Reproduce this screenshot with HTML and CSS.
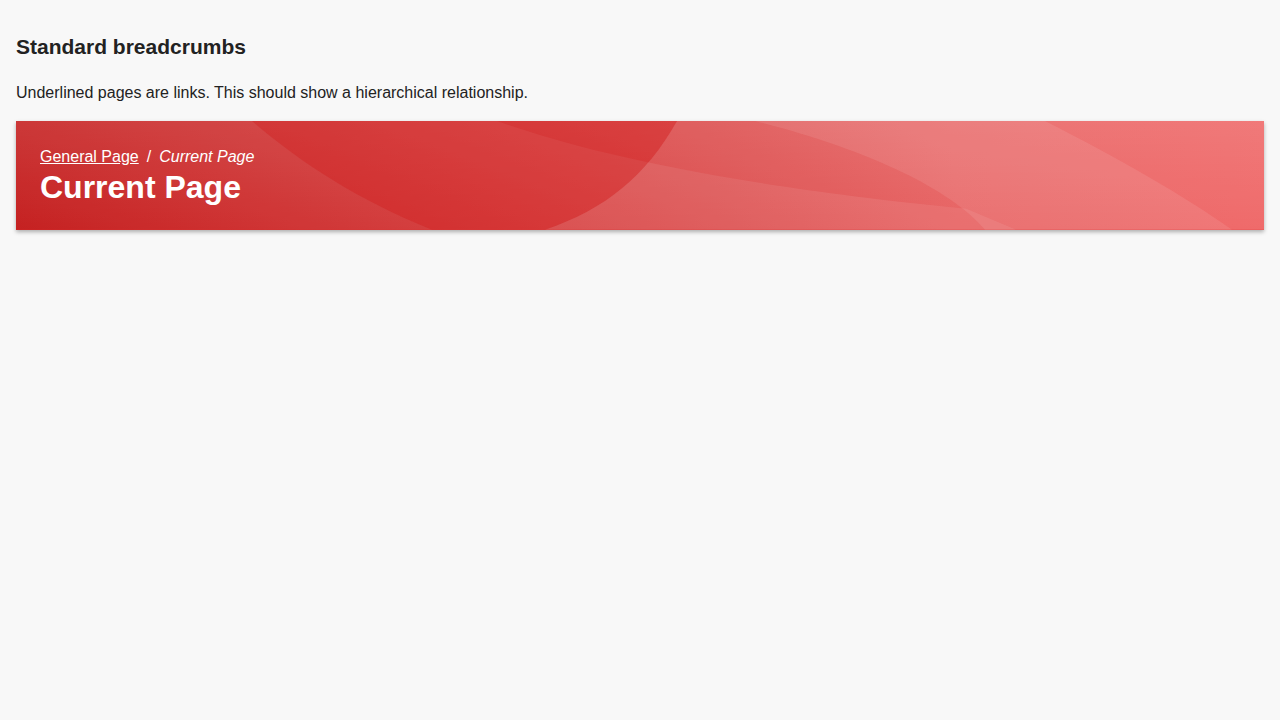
FILE: index.html
```html
<!DOCTYPE html>
<html lang="en">
<head>
<meta charset="utf-8">
<title>Standard breadcrumbs</title>
<link rel="stylesheet" href="styles.css">
</head>
<body>
<main class="page">
  <h2 class="section-title">Standard breadcrumbs</h2>
  <p class="section-desc">Underlined pages are links. This should show a hierarchical relationship.</p>
  <header class="banner">
    <svg class="banner-bg" viewBox="0 0 1248 109" preserveAspectRatio="none" aria-hidden="true">
      <defs>
        <linearGradient id="base" gradientUnits="userSpaceOnUse" x1="0" y1="109" x2="1248" y2="0">
          <stop offset="0" stop-color="#c10f0f"/>
          <stop offset="0.3" stop-color="#d02c2c"/>
          <stop offset="0.5" stop-color="#d84040"/>
          <stop offset="0.75" stop-color="#e65a5a"/>
          <stop offset="1" stop-color="#ef6262"/>
        </linearGradient>
        <linearGradient id="topglow" x1="0" y1="0" x2="0" y2="1">
          <stop offset="0" stop-color="#ffffff" stop-opacity="0.1"/>
          <stop offset="1" stop-color="#ffffff" stop-opacity="0"/>
        </linearGradient>
      </defs>
      <rect x="0" y="0" width="1248" height="109" fill="url(#base)"/>
      <rect x="0" y="0" width="1248" height="109" fill="url(#topglow)"/>
      <!-- lighter band below the sweeping curve -->
      <path d="M0,0 L481,0 C560,28 690,62 950,88 L1000,109 L0,109 Z" fill="#ffffff" fill-opacity="0.08"/>
      <!-- big circle -->
      <path d="M236,0 L661,0 C630,55 590,88 529,109 L416,109 C340,78 285,42 236,0 Z" fill="#d01010" fill-opacity="0.28"/>
      <!-- right of circle lighter -->
      <path d="M661,0 C630,55 590,88 529,109 L1248,109 L1248,0 Z" fill="#ffffff" fill-opacity="0.06"/>
      <!-- lens -->
      <path d="M739,0 C850,28 935,68 969,109 L1216,109 C1170,76 1100,36 1029,0 Z" fill="#ffffff" fill-opacity="0.09"/>
    </svg>
    <nav class="crumbs" aria-label="Breadcrumb">
      <a class="crumb-link" href="#">General Page</a><span class="crumb-sep">/</span><span class="crumb-current">Current Page</span>
    </nav>
    <h1 class="banner-title">Current Page</h1>
  </header>
</main>
</body>
</html>
```

FILE: styles.css
```css
html, body {
  margin: 0;
  padding: 0;
  background: #f8f8f8;
}

body {
  font-family: "Liberation Sans", Arial, sans-serif;
  color: #222222;
}

.page {
  padding: 16px;
}

.section-title {
  font-size: 21px;
  font-weight: bold;
  margin: 19px 0 25px;
  color: #222222;
}

.section-desc {
  font-size: 16px;
  margin: 0 0 19px;
  color: #222222;
}

.banner {
  position: relative;
  overflow: hidden;
  padding: 26px 24px 24px;
  box-shadow: 0 2px 4px rgba(0, 0, 0, 0.3);
  color: #ffffff;
  background: #d33;
}

.banner-bg {
  position: absolute;
  inset: 0;
  width: 100%;
  height: 100%;
  display: block;
}

.crumbs {
  position: relative;
  font-size: 16px;
  line-height: 20px;
  color: #ffffff;
}

.crumb-link {
  color: #ffffff;
  text-decoration: underline;
}

.crumb-sep {
  margin: 0 8px;
}

.crumb-current {
  font-style: italic;
}

.banner-title {
  position: relative;
  margin: 2px 0 0;
  font-size: 32px;
  line-height: 1.15;
  font-weight: bold;
  color: #ffffff;
}
```
